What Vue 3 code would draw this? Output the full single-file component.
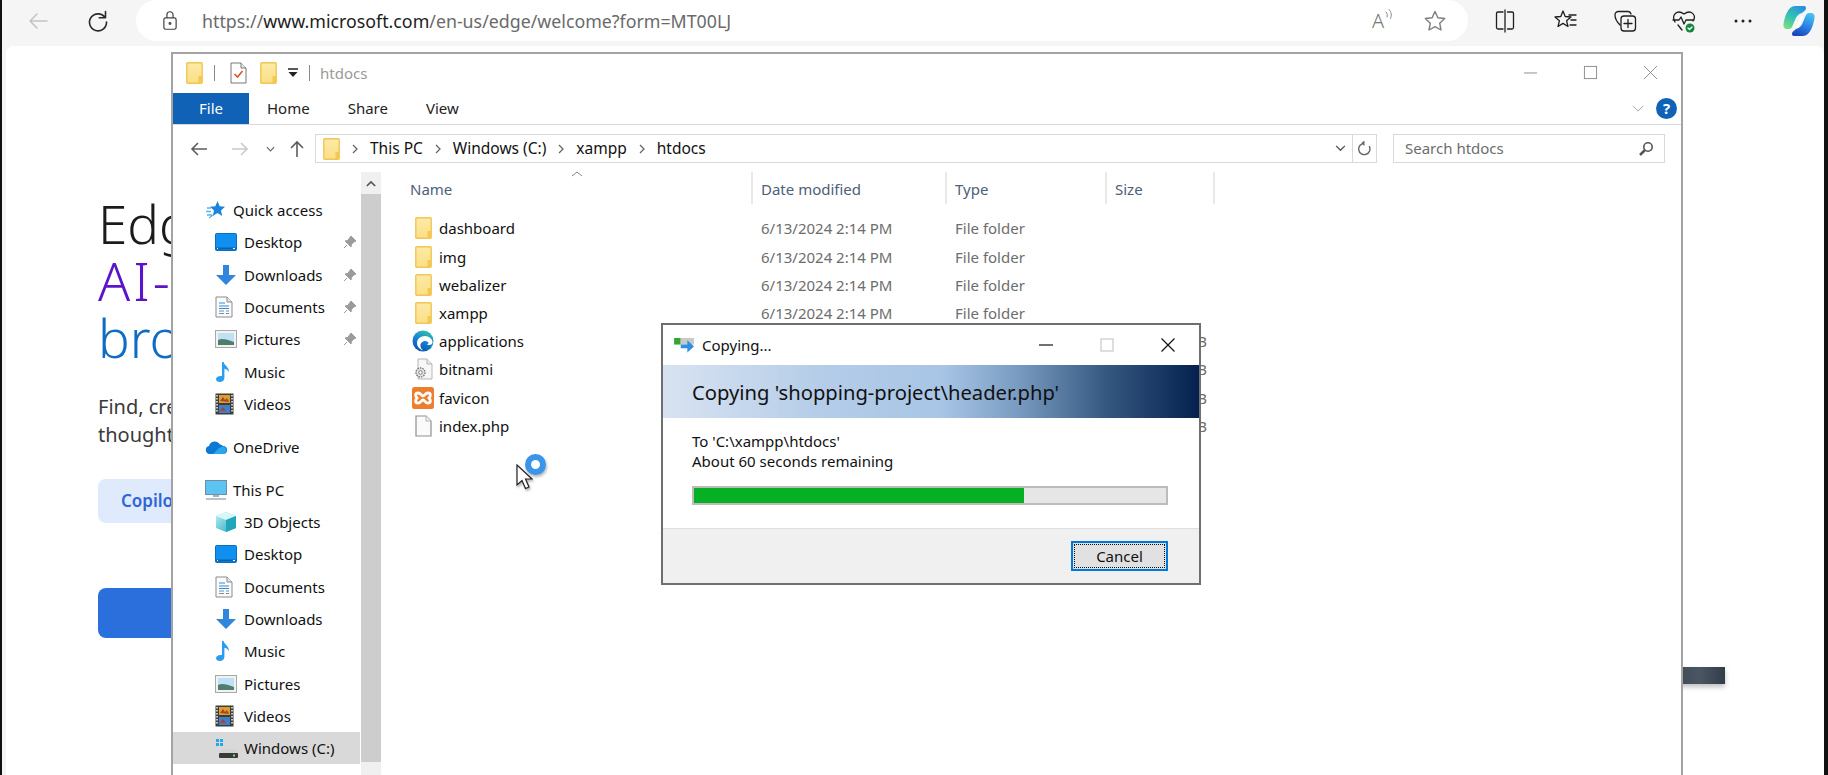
<template>
  <div class="screen">
    <svg class="defs" aria-hidden="true">
      <defs>
        <linearGradient id="folderFill" x1="0" y1="0" x2="0" y2="1">
          <stop offset="0" stop-color="#fdeaa6" />
          <stop offset="1" stop-color="#fbdf85" />
        </linearGradient>
        <linearGradient id="edgeFill" x1="0.7" y1="0" x2="0.3" y2="1">
          <stop offset="0" stop-color="#35c1a0" />
          <stop offset="0.45" stop-color="#1687d9" />
          <stop offset="1" stop-color="#0b4fa8" />
        </linearGradient>
        <linearGradient id="cubeFill" x1="0" y1="0" x2="1" y2="1">
          <stop offset="0" stop-color="#bdeff2" />
          <stop offset="1" stop-color="#22a9bd" />
        </linearGradient>
        <linearGradient id="copilotLeft" x1="0.8" y1="0" x2="0.2" y2="1">
          <stop offset="0" stop-color="#2b8fe0" />
          <stop offset="0.55" stop-color="#32c4b0" />
          <stop offset="1" stop-color="#7fdc84" />
        </linearGradient>
        <linearGradient id="copilotRight" x1="0.8" y1="0" x2="0.3" y2="1">
          <stop offset="0" stop-color="#45c4f0" />
          <stop offset="0.55" stop-color="#2a7fe8" />
          <stop offset="1" stop-color="#1b46b8" />
        </linearGradient>
      </defs>
      <symbol id="folder" viewBox="0 0 17 22">
        <rect x="0.8" y="0.8" width="15.4" height="20.4" rx="1" fill="url(#folderFill)" stroke="#f0c654" stroke-width="1.4" />
        <rect x="12.5" y="14" width="3.6" height="7" fill="#f5c84e" />
      </symbol>
      <symbol id="desktop" viewBox="0 0 22 18">
        <rect x="0.5" y="0.5" width="21" height="17" rx="1" fill="#0f8ff0" stroke="#0b6fc0" />
        <path d="M1 15.5h20" stroke="#0a62ad" stroke-width="2" />
        <path d="M2 15.5h1M18 15.5h2" stroke="#fff" />
      </symbol>
      <symbol id="downloads" viewBox="0 0 22 22">
        <path d="M8 1h6v10h7l-10 10L1 11h7z" fill="#2f86dc" />
      </symbol>
      <symbol id="documents" viewBox="0 0 18 22">
        <path d="M1 1h11l5 5v15H1z" fill="#fbfbfb" stroke="#8b8b8b" />
        <path d="M12 1v5h5" fill="#e6e6e6" stroke="#8b8b8b" />
        <path d="M4 7h6M4 10h10M4 12.5h10" stroke="#2a8fe0" />
        <path d="M4 15h5M4 17.5h5M11 15h3M11 17.5h3" stroke="#7c8c99" />
      </symbol>
      <symbol id="pictures" viewBox="0 0 22 18">
        <rect x="0.5" y="0.5" width="21" height="17" fill="#f2f2f2" stroke="#a9a9a9" />
        <rect x="3" y="3" width="16" height="12" fill="#bfe0f5" />
        <path d="M3 10c4-2 8-1 16 2v3H3z" fill="#4f7f6c" />
      </symbol>
      <symbol id="music" viewBox="0 0 16 22">
        <path d="M7 1h1.600c.6 3.500 5.400 4.800 5.400 10-1.300-2-3-3-4.600-3.300V17c0 2.600-2.300 4-4.600 4S1 19.800 1 18s2.400-3.500 6-3z" fill="#2a9df0" />
      </symbol>
      <symbol id="videos" viewBox="0 0 19 22">
        <rect x="0.5" y="0.500" width="18" height="21" fill="#3d3d3d" />
        <rect x="4" y="2" width="11" height="8" fill="#d8a12a" />
        <rect x="4" y="12" width="11" height="8" fill="#3f7fc7" />
        <path d="M5 8l3-4 2 3 2-2 2 4zM5 18l3-4 3 4z" fill="#b3402a" />
        <path d="M2 2v18M17 2v18" stroke="#eee" stroke-dasharray="1.500 1.500" stroke-width="1.500" />
      </symbol>
      <symbol id="onedrive" viewBox="0 0 22 14">
        <path d="M5 14a4 4 0 0 1-1-7.900 6 6 0 0 1 11-1.600 4.500 4.500 0 0 1 3 1.500A4 4 0 0 1 18 14z" fill="#0a78d4" />
        <path d="M8 14l6-6 4-1.800A4 4 0 0 1 18 14z" fill="#28a8ea" />
      </symbol>
      <symbol id="thispc" viewBox="0 0 22 20">
        <rect x="0.500" y="0.500" width="21" height="14" fill="#5cc3f2" stroke="#6f8da3" />
        <path d="M8 15h6v2H8z" fill="#a5b4bf" />
        <path d="M1 19h20" stroke="#9fb0bd" stroke-width="1.500" />
      </symbol>
      <symbol id="cube" viewBox="0 0 22 22">
        <path d="M11 1l10 4v12l-10 4-10-4V5z" fill="url(#cubeFill)" />
        <path d="M11 1l10 4-10 4L1 5z" fill="#d9f7f7" />
        <path d="M11 9v12l10-4V5z" fill="#1fa6ba" />
      </symbol>
      <symbol id="drive" viewBox="0 0 24 22">
        <path d="M1 2h3v3H1zM5 2h3v3H5zM1 6h3v3H1zM5 6h3v3H5z" fill="#22a7e8" />
        <path d="M8 12h12l3 4H4z" fill="#d3d3d3" />
        <rect x="4" y="16" width="19" height="5" rx="1" fill="#3a3a3a" />
        <rect x="18" y="17.500" width="2" height="2" fill="#6fe06f" />
      </symbol>
      <symbol id="usb" viewBox="0 0 24 22">
        <path d="M8 12h12l3 4H4z" fill="#d3d3d3" />
        <rect x="4" y="16" width="19" height="5" rx="1" fill="#3a3a3a" />
      </symbol>
      <symbol id="quick" viewBox="0 0 20 20">
        <path d="M12.500 1l2.200 5.300 5.300.5-4 3.700 1.200 5.500-4.700-2.900-4.700 2.900 1.200-5.500-4-3.700 5.300-.5z" fill="#1f83dc" />
        <path d="M2 8h4M1 11.500h5M2 15h5M4 18l4-3" stroke="#58b4ee" stroke-width="1.300" />
      </symbol>
      <symbol id="pin" viewBox="0 0 14 14">
        <path d="M8 1l5 5-2 .8-2.600 2.600-.4 2.600-6-6 2.600-.4L6.600 3zM4 10l-3 3" fill="#9b9b9b" stroke="#9b9b9b" stroke-width="1" />
      </symbol>
      <symbol id="edge" viewBox="0 0 22 22">
        <circle cx="11" cy="11" r="10.500" fill="url(#edgeFill)" />
        <path d="M20.500 12.500c.3-3.500-3.500-6.500-7.500-6.500-4.500 0-8 3-8 7 0 3.500 2.500 6.500 6.500 7.500-2.500-1.500-3.500-4-3-6 .5-2 2.500-3.500 4.500-3.500 2 0 3.500 1 3.500 2 0 .5-.5 1-1.500 1 1 1.500 5 1.500 5.500-1.500z" fill="#fff" />
        <path d="M21 12.500c-.5 4-3 7-6 8 2-.3 4-1.500 5-3.500z" fill="#4fd35c" />
      </symbol>
      <symbol id="gearfile" viewBox="0 0 20 22">
        <path d="M5 1h9l5 5v15H5z" fill="#f7f7f7" stroke="#b5b5b5" />
        <path d="M14 1v5h5" fill="#eaeaea" stroke="#b5b5b5" />
        <circle cx="7.500" cy="14.500" r="4.500" fill="#e6e6e6" stroke="#7a7a7a" stroke-width="1.500" stroke-dasharray="1.500 1" />
        <circle cx="7.500" cy="14.500" r="1.800" fill="#fff" stroke="#7a7a7a" />
      </symbol>
      <symbol id="xampp" viewBox="0 0 22 22">
        <rect width="22" height="22" rx="2.500" fill="#ee7d2d" />
        <path d="M6 6c3 0 3 3 5 3s2-3 5-3 3 3 1 5c2 2 2 5-1 5s-3-3-5-3-2 3-5 3-3-3-1-5c-2-2-2-5 1-5z" fill="none" stroke="#fff" stroke-width="2.800" />
      </symbol>
      <symbol id="page" viewBox="0 0 17 22">
        <path d="M1 1h10l5 5v15H1z" fill="#fafafa" stroke="#8f8f8f" stroke-width="1.200" />
        <path d="M11 1v5h5" fill="#f1f1f1" stroke="#b5b5b5" />
      </symbol>
      <symbol id="copyarrow" viewBox="0 0 22 18">
        <rect y="1" width="7" height="7" fill="#36a537" />
        <rect x="7" y="1" width="14" height="7" fill="#c9c9c9" />
        <path d="M7 8h7V3.500l7 6.500-7 6.500V12H7z" fill="#2f8fe3" />
      </symbol>
    </svg>

    <header class="toolbar">
      <div class="toolbar__nav">
        <svg class="toolbar__back" viewBox="0 0 24 24"><path d="M21 12H4M11 5l-7 7 7 7" /></svg>
        <svg class="toolbar__reload" viewBox="0 0 24 24"><path d="M19 8.500A8.500 8.500 0 1 0 20.500 13M19.500 2.500v6.300h-6.300" /></svg>
      </div>
      <div class="address">
        <svg class="address__lock" viewBox="0 0 18 24"><rect x="2" y="9" width="14" height="13" rx="2" /><path d="M5.500 9V5.500a3.500 3.500 0 0 1 7 0V9" /><circle cx="9" cy="15.500" r="1" /></svg>
        <span class="address__url">https://<b>www.microsoft.com</b>/en-us/edge/welcome?form=MT00LJ</span>
        <div class="address__tools">
          <span class="read">
            <span class="read__a">A</span>
            <svg viewBox="0 0 8 14"><path d="M1 4c1.500 1.500 1.500 3.500 1 5M4 1.500c2.500 2.500 3 6 1.500 9" /></svg>
          </span>
          <svg class="star" viewBox="0 0 24 24"><path d="M12 2.500l2.900 6.200 6.800.8-5 4.700 1.300 6.800-6-3.400-6 3.400 1.300-6.800-5-4.700 6.800-.8z" /></svg>
        </div>
      </div>
      <div class="actions">
        <svg viewBox="0 0 24 24"><path d="M10 3H5a1.500 1.500 0 0 0-1.500 1.500v14A1.500 1.500 0 0 0 5 20h5M14.500 3H19a1.500 1.500 0 0 1 1.500 1.500v14A1.500 1.500 0 0 1 19 20h-4.500M12 1v22" /></svg>
        <svg viewBox="0 0 24 24"><path d="M9 2l2.200 5.500 5.800.5-4.400 3.800 1.400 5.700L9 14.400l-5 3.100 1.400-5.700L1 8l5.800-.5zM15 6h7M17 11h5M16 16h6" /></svg>
        <svg class="actions__collections" viewBox="0 0 24 24"><path d="M7 16C4 13 2 9 2 6c0-2 1.500-3.500 3.500-3.500H15c1.500 0 2.500 1 3 2.500" /><rect x="8" y="7" width="14.500" height="15" rx="3" /><path d="M15 10.500v8M11 14.500h8" /></svg>
        <svg viewBox="0 0 24 24">
          <path d="M3 13C-1 6 5 0 12 5c7-5 13 1 9 7M1 11h6l2-3 3 7 2-4h8M6 16l4 5" />
          <circle cx="18" cy="19" r="4.500" fill="#12883a" stroke="none" />
          <path d="M16 19l1.500 1.500 2.500-2.500" stroke="#fff" />
        </svg>
        <svg viewBox="0 0 24 24"><circle cx="5" cy="12" r="1.500" class="dot" /><circle cx="12" cy="12" r="1.500" class="dot" /><circle cx="19" cy="12" r="1.500" class="dot" /></svg>
        <svg class="copilot" viewBox="0 0 32 32">
          <path d="M12 1h9c2 0 2.500 2 1.500 4L19 8c-4 1-6 4-7 7l-3 7c-1 2-3 2-5 2-2.500 0-4-2-3.500-5C1.500 12 5 1 12 1z" fill="url(#copilotLeft)" />
          <path d="M20 31h-9c-2 0-2.500-2-1.500-4l3.500-3c4-1 6-4 7-7l3-7c1-2 3-2 5-2 2.500 0 4 2 3.500 5C30.500 20 27 31 20 31z" fill="url(#copilotRight)" />
          <path d="M19 10c-2 2-4 7-6 12l1 1c3-2 5-7 6-12z" fill="#fff" />
        </svg>
      </div>
    </header>

    <main class="page">
      <div class="intro">
        <h1 class="hero">
          <span>Edg</span>
          <span class="hero__ai">AI-</span>
          <span class="hero__browser">bro</span>
        </h1>
        <p class="lead">Find, cre<br>thought</p>
        <div class="chip">Copilo</div>
        <div class="cta"></div>
      </div>
    </main>

    <div class="dark-block"></div>

    <section class="explorer">
      <div class="titlebar">
        <div class="qat">
          <svg class="qat__folder"><use href="#folder" /></svg>
          <i class="qat__sep"></i>
          <svg class="qat__doc" viewBox="0 0 17 22">
            <path d="M1 1h10l5 5v15H1z" fill="#fff" stroke="#777" />
            <path d="M11 1v5h5" fill="#eee" stroke="#777" />
            <path d="M4.500 12l3 3 5-6" fill="none" stroke="#d9562a" stroke-width="1.600" />
          </svg>
          <svg class="qat__folder qat__folder--second"><use href="#folder" /></svg>
          <svg class="qat__drop" viewBox="0 0 12 12"><path d="M1 2h10" stroke="#222" stroke-width="1.500" /><path d="M1.500 5h9L6 10z" fill="#222" /></svg>
          <i class="qat__sep qat__sep--last"></i>
          <span class="qat__title">htdocs</span>
        </div>
        <div class="winctl">
          <svg viewBox="0 0 16 16"><path d="M1 8.500h14" /></svg>
          <svg viewBox="0 0 16 16"><rect x="1.500" y="1.500" width="13" height="13" /></svg>
          <svg viewBox="0 0 16 16"><path d="M1 1l14 14M15 1L1 15" /></svg>
        </div>
      </div>

      <nav class="ribbon">
        <span class="ribbon__file">File</span>
        <span class="ribbon__tab ribbon__tab--home">Home</span>
        <span class="ribbon__tab">Share</span>
        <span class="ribbon__tab">View</span>
        <svg class="ribbon__chev" viewBox="0 0 14 8"><path d="M1 1l6 6 6-6" /></svg>
        <span class="ribbon__help">?</span>
      </nav>

      <div class="pathrow">
        <svg class="pathrow__nav" viewBox="0 0 20 20"><path d="M18 10H3M9 4l-6 6 6 6" /></svg>
        <svg class="pathrow__nav pathrow__nav--off" viewBox="0 0 20 20"><path d="M2 10h15M11 4l6 6-6 6" /></svg>
        <svg class="pathrow__small" viewBox="0 0 10 6"><path d="M1 1l4 4 4-4" /></svg>
        <svg class="pathrow__nav pathrow__nav--up" viewBox="0 0 20 20"><path d="M10 18V3M4 9l6-6 6 6" /></svg>
        <div class="crumbs">
          <svg class="crumbs__folder"><use href="#folder" /></svg>
          <template v-for="crumb in crumbs" :key="crumb">
            <svg class="crumbs__sep" viewBox="0 0 6 10"><path d="M1 1l4 4-4 4" /></svg>
            <span class="crumbs__item">{{ crumb }}</span>
          </template>
          <div class="crumbs__end">
            <svg class="crumbs__down" viewBox="0 0 12 8"><path d="M1 1l5 5 5-5" /></svg>
            <span class="crumbs__refresh">
              <svg viewBox="0 0 16 16"><path d="M13 5.500A6 6 0 1 1 8 2.500H5.500M8 .500l-2.500 2 2.500 2" /></svg>
            </span>
          </div>
        </div>
        <div class="search">
          <span class="search__text">Search htdocs</span>
          <svg viewBox="0 0 16 16"><circle cx="10" cy="6" r="4.200" /><path d="M7 9l-5 5" class="search__handle" /></svg>
        </div>
      </div>

      <div class="content">
        <aside class="tree">
          <div
            v-for="row in treeRows"
            :key="row.id"
            class="tree__row"
            :class="{
              'tree__row--root': row.root,
              'tree__row--active': row.active,
              'tree__row--gap': row.gap
            }"
          >
            <svg class="tree__icon" :style="{ width: row.w + 'px', height: row.h + 'px' }"><use :href="'#' + row.icon" /></svg>
            <span class="tree__label">{{ row.label }}</span>
            <svg v-if="row.pin" class="tree__pin"><use href="#pin" /></svg>
          </div>
        </aside>

        <div class="scrollbar">
          <div class="scrollbar__btn">
            <svg viewBox="0 0 12 8"><path d="M1 7l5-5 5 5" /></svg>
          </div>
          <div class="scrollbar__thumb"></div>
          <div class="scrollbar__end"></div>
        </div>

        <div class="files">
          <svg class="files__sort" viewBox="0 0 12 6"><path d="M1 5l5-4 5 4" /></svg>
          <div class="files__head">
            <span class="files__name">Name</span>
            <span>Date modified</span>
            <span>Type</span>
            <span>Size</span>
          </div>
          <div v-for="file in files" :key="file.name" class="files__row">
            <div class="files__cell">
              <span class="files__iconbox">
                <svg :style="{ width: file.w + 'px', height: file.h + 'px' }"><use :href="'#' + file.icon" /></svg>
              </span>
              <span class="files__label">{{ file.name }}</span>
            </div>
            <span class="files__meta">{{ file.date }}</span>
            <span class="files__meta">{{ file.type }}</span>
            <span class="files__size">{{ file.size }}</span>
          </div>
        </div>
      </div>
    </section>

    <section class="dialog">
      <div class="dialog__title">
        <svg class="dialog__icon"><use href="#copyarrow" /></svg>
        <span>Copying...</span>
        <div class="dialog__ctl">
          <svg viewBox="0 0 14 14"><path d="M0 7h14" /></svg>
          <svg class="dialog__max" viewBox="0 0 14 14"><rect x="1" y="1" width="12" height="12" /></svg>
          <svg viewBox="0 0 14 14"><path d="M0.500 0.500l13 13M13.500 0.500l-13 13" /></svg>
        </div>
      </div>
      <div class="dialog__band">Copying 'shopping-project\header.php'</div>
      <div class="dialog__body">
        <p>To 'C:\xampp\htdocs'</p>
        <p>About 60 seconds remaining</p>
        <div class="progress"><div class="progress__fill" :style="{ width: progress + '%' }"></div></div>
      </div>
      <div class="dialog__foot">
        <button class="cancel" type="button"><span>Cancel</span></button>
      </div>
    </section>

    <div class="pointer">
      <span class="pointer__ring"></span>
      <svg class="pointer__arrow" viewBox="0 0 17 26">
        <path d="M1 1v20l5-4.500 3.500 8 3.500-1.500-3.500-8H16z" fill="#fff" stroke="#222" stroke-width="1.200" />
      </svg>
    </div>
  </div>
</template>

<script setup>
const progress = 70

const crumbs = ['This PC', 'Windows (C:)', 'xampp', 'htdocs']

const treeRows = [
  { id: 'quick', label: 'Quick access', icon: 'quick', w: 20, h: 20, root: true },
  { id: 'd1', label: 'Desktop', icon: 'desktop', w: 22, h: 18, pin: true },
  { id: 'dl1', label: 'Downloads', icon: 'downloads', w: 22, h: 22, pin: true },
  { id: 'doc1', label: 'Documents', icon: 'documents', w: 18, h: 22, pin: true },
  { id: 'pic1', label: 'Pictures', icon: 'pictures', w: 22, h: 18, pin: true },
  { id: 'm1', label: 'Music', icon: 'music', w: 16, h: 22 },
  { id: 'v1', label: 'Videos', icon: 'videos', w: 19, h: 22 },
  { id: 'one', label: 'OneDrive', icon: 'onedrive', w: 22, h: 14, root: true, gap: true },
  { id: 'pc', label: 'This PC', icon: 'thispc', w: 22, h: 20, root: true, gap: true },
  { id: '3d', label: '3D Objects', icon: 'cube', w: 22, h: 22 },
  { id: 'd2', label: 'Desktop', icon: 'desktop', w: 22, h: 18 },
  { id: 'doc2', label: 'Documents', icon: 'documents', w: 18, h: 22 },
  { id: 'dl2', label: 'Downloads', icon: 'downloads', w: 22, h: 22 },
  { id: 'm2', label: 'Music', icon: 'music', w: 16, h: 22 },
  { id: 'pic2', label: 'Pictures', icon: 'pictures', w: 22, h: 18 },
  { id: 'v2', label: 'Videos', icon: 'videos', w: 19, h: 22 },
  { id: 'c', label: 'Windows (C:)', icon: 'drive', w: 24, h: 22, active: true },
  { id: 'tmp', label: 'Temporary Storage (D:)', icon: 'usb', w: 24, h: 22 },
]

const folderMeta = { date: '6/13/2024 2:14 PM', type: 'File folder', size: '', icon: 'folder', w: 17, h: 22 }

// the rows below the dialog only show their name and the tail of the size
const files = [
  { ...folderMeta, name: 'dashboard' },
  { ...folderMeta, name: 'img' },
  { ...folderMeta, name: 'webalizer' },
  { ...folderMeta, name: 'xampp' },
  { name: 'applications', date: '', type: '', size: '4 KB', icon: 'edge', w: 22, h: 22 },
  { name: 'bitnami', date: '', type: '', size: '1 KB', icon: 'gearfile', w: 20, h: 22 },
  { name: 'favicon', date: '', type: '', size: '31 KB', icon: 'xampp', w: 22, h: 22 },
  { name: 'index.php', date: '', type: '', size: '1 KB', icon: 'page', w: 17, h: 22 },
]
</script>

<style>
html, body {
  margin: 0;
  background: #fff;
  overflow: hidden;
}
</style>

<style scoped>
.screen {
  position: relative;
  width: 1828px;
  height: 775px;
  box-sizing: border-box;
  overflow: hidden;
  background: #f5f5f5;
  border-left: 2px solid #111;
  border-right: 4px solid #111;
  font-family: "Noto Sans", "Open Sans", sans-serif;
  font-size: 15px;
  color: #111;
}

.defs {
  position: absolute;
  width: 0;
  height: 0;
}

/* browser chrome */
.toolbar {
  display: flex;
  height: 46px;
}

.toolbar__nav {
  display: flex;
  width: 134px;
  height: 41px;
  align-items: center;
  padding-left: 24px;
  box-sizing: border-box;
}

.toolbar__nav svg,
.actions svg,
.star,
.read svg {
  fill: none;
  stroke-linecap: round;
  stroke-linejoin: round;
}

.toolbar__back {
  width: 24px;
  height: 24px;
  stroke: #c3c3c3;
  stroke-width: 1.5;
}

.toolbar__reload {
  width: 24px;
  height: 24px;
  margin-left: 36px;
  stroke: #2a2a2a;
  stroke-width: 1.6;
}

.address {
  display: flex;
  align-items: center;
  width: 1332px;
  height: 41px;
  background: #fff;
  border-radius: 21px;
}

.address__lock {
  width: 16px;
  height: 21px;
  margin-left: 26px;
  fill: none;
  stroke: #444;
  stroke-width: 1.400;
}

.address__url {
  margin-left: 24px;
  font-size: 17.800px;
  color: #6a6a6a;
  white-space: nowrap;
}

.address__url b {
  font-weight: 400;
  color: #1c1c1c;
}

.address__tools {
  display: flex;
  align-items: center;
  gap: 29px;
  margin-left: auto;
  padding-right: 21px;
}

.read {
  display: flex;
  align-items: flex-start;
  width: 22px;
}

.read__a {
  font-size: 20px;
  font-weight: 300;
  line-height: 26px;
  color: #777;
}

.read svg {
  width: 8px;
  height: 14px;
  margin-left: 1px;
  stroke: #8a8a8a;
  stroke-width: 1;
}

.star {
  width: 24px;
  height: 24px;
  stroke: #7d7d7d;
  stroke-width: 1.400;
}

.actions {
  display: grid;
  grid-template-columns: 61px 62px 56px 59px 55px 32px;
  align-items: center;
  height: 41px;
  padding-left: 25px;
}

.actions svg {
  width: 24px;
  height: 24px;
  stroke: #1f1f1f;
  stroke-width: 1.300;
}

.actions .dot {
  fill: #1f1f1f;
  stroke: none;
}

.actions .actions__collections {
  margin-left: -3px;
}

.actions .copilot {
  width: 32px;
  height: 32px;
  stroke: none;
  margin-left: -3px;
}

/* page behind the windows */
.page {
  height: 729px;
  margin-left: 4px;
  padding: 149px 0 0 92px;
  box-sizing: border-box;
  background: #fff;
  border-radius: 8px 8px 0 0;
}

.intro {
  width: 90px;
}

.hero {
  margin: 0;
  font-size: 53px;
  line-height: 57px;
  font-weight: 300;
  color: #1b1b1b;
  white-space: nowrap;
}

.hero span {
  display: block;
}

.hero .hero__ai {
  color: #5c14c9;
  letter-spacing: 3px;
}

.hero .hero__browser {
  color: #0f6cc4;
}

.lead {
  margin: 27px 0 0;
  font-size: 20px;
  line-height: 28px;
  color: #3a3a3a;
  white-space: nowrap;
}

.chip {
  width: 100px;
  height: 44px;
  margin-top: 30px;
  padding-left: 23px;
  box-sizing: border-box;
  background: #dfeafc;
  border-radius: 8px;
  font-size: 17px;
  font-weight: 600;
  line-height: 44px;
  color: #2d66d6;
}

.cta {
  width: 100px;
  height: 50px;
  margin-top: 65px;
  background: #2a6fdb;
  border-radius: 8px;
}

.dark-block {
  position: absolute;
  left: 1660px;
  top: 667px;
  width: 63px;
  height: 17px;
  background: linear-gradient(90deg, #3a4450, #4a5663 60%, #333d48);
  box-shadow: 0 3px 5px rgba(0, 0, 0, 0.25);
}

/* explorer window */
.explorer {
  position: absolute;
  left: 169px;
  top: 52px;
  display: flex;
  flex-direction: column;
  width: 1512px;
  height: 760px;
  box-sizing: border-box;
  background: #fff;
  border: 2px solid #a3a3a3;
}

.titlebar {
  display: flex;
  align-items: center;
  justify-content: space-between;
  height: 39px;
  padding-bottom: 2px;
  box-sizing: border-box;
  flex: none;
}

.qat {
  display: flex;
  align-items: center;
  padding-left: 13px;
}

.qat__folder {
  width: 17px;
  height: 22px;
}

.qat__folder--second {
  margin-left: 13px;
}

.qat__sep {
  width: 1px;
  height: 16px;
  margin-left: 11px;
  background: #8a8a8a;
}

.qat__sep--last {
  margin-left: 10px;
}

.qat__doc {
  width: 17px;
  height: 22px;
  margin-left: 15px;
}

.qat__drop {
  width: 12px;
  height: 12px;
  margin-left: 10px;
}

.qat__title {
  margin-left: 10px;
  color: #9a9a9a;
}

.winctl {
  display: flex;
  align-items: center;
  gap: 45px;
  padding-right: 23px;
}

.winctl svg {
  width: 15px;
  height: 15px;
  fill: none;
  stroke: #8a8a8a;
  stroke-width: 1;
}

.ribbon {
  position: relative;
  display: flex;
  align-items: center;
  height: 31px;
  flex: none;
  border-bottom: 1px solid #d9d9d9;
}

.ribbon__file {
  width: 76px;
  height: 31px;
  background: #0f62b5;
  color: #fff;
  line-height: 30px;
  text-align: center;
}

.ribbon__tab {
  margin-left: 38px;
  margin-bottom: 2px;
  color: #222;
}

.ribbon__tab--home {
  margin-left: 18px;
}

.ribbon__chev {
  width: 12px;
  height: 7px;
  margin-left: auto;
  fill: none;
  stroke: #9a9a9a;
  stroke-width: 1;
}

.ribbon__help {
  width: 21px;
  height: 21px;
  margin: 0 4px 0 12px;
  border-radius: 50%;
  background: #0f62b5;
  color: #fff;
  font-size: 15px;
  font-weight: 700;
  line-height: 21px;
  text-align: center;
}

.pathrow {
  display: flex;
  align-items: center;
  height: 29px;
  margin: 9px 0;
  flex: none;
  padding-left: 16px;
}

.pathrow svg {
  fill: none;
}

.pathrow__nav {
  width: 20px;
  height: 20px;
  stroke: #5d5d5d;
  stroke-width: 1.600;
}

.pathrow__nav--off {
  margin-left: 21px;
  stroke: #c9c9c9;
}

.pathrow__nav--up {
  margin-left: 12px;
}

.pathrow__small {
  width: 9px;
  height: 6px;
  margin-left: 16px;
  stroke: #666;
  stroke-width: 1.300;
}

.crumbs {
  display: flex;
  align-items: center;
  width: 1062px;
  height: 29px;
  margin-left: 8px;
  box-sizing: border-box;
  padding-left: 7px;
  border: 1px solid #d9d9d9;
}

.crumbs__folder {
  width: 17px;
  height: 22px;
}

.crumbs__sep {
  width: 6px;
  height: 10px;
  margin: 0 12px;
  stroke: #666;
  stroke-width: 1.300;
}

.crumbs__item {
  margin-bottom: 2px;
  font-size: 15.500px;
  color: #111;
}

.crumbs__end {
  display: flex;
  align-items: center;
  height: 100%;
  margin-left: auto;
}

.crumbs__down {
  width: 11px;
  height: 7px;
  margin-right: 6px;
  stroke: #555;
  stroke-width: 1.600;
}

.crumbs__refresh {
  display: flex;
  align-items: center;
  justify-content: center;
  width: 23px;
  height: 100%;
  border-left: 1px solid #d9d9d9;
}

.crumbs__refresh svg {
  width: 15px;
  height: 15px;
  stroke: #666;
  stroke-width: 1.500;
}

.search {
  display: flex;
  align-items: center;
  justify-content: space-between;
  width: 272px;
  height: 29px;
  margin-left: 16px;
  box-sizing: border-box;
  padding: 0 10px 0 11px;
  border: 1px solid #d9d9d9;
  color: #6d6d6d;
}

.search__text {
  margin-bottom: 2px;
}

.search svg {
  width: 16px;
  height: 16px;
  stroke: #555;
  stroke-width: 1.600;
}

.search__handle {
  stroke-width: 2.500;
}

.content {
  display: flex;
  flex: 1;
  min-height: 0;
}

.tree {
  width: 188px;
  flex: none;
  padding-top: 22px;
  overflow: hidden;
}

.tree__row {
  position: relative;
  display: flex;
  align-items: center;
  height: 32.300px;
  padding-left: 71px;
  white-space: nowrap;
  color: #111;
}

.tree__row--root {
  padding-left: 60px;
}

.tree__row--gap {
  margin-top: 10.700px;
}

.tree__row--active {
  margin-right: 1px;
  background: #d9d9d9;
}

.tree__icon {
  position: absolute;
  left: 42px;
  flex: none;
}

.tree__row--root .tree__icon {
  left: 32px;
}

.tree__pin {
  position: absolute;
  left: 170px;
  width: 14px;
  height: 14px;
}

.scrollbar {
  display: flex;
  flex-direction: column;
  width: 20px;
  flex: none;
}

.scrollbar__btn {
  display: flex;
  align-items: center;
  justify-content: center;
  height: 22px;
  background: #f0f0f0;
}

.scrollbar__btn svg {
  width: 10px;
  height: 7px;
  fill: none;
  stroke: #555;
  stroke-width: 2;
}

.scrollbar__thumb {
  height: 568px;
  background: #cdcdcd;
}

.scrollbar__end {
  flex: 1;
  background: #f0f0f0;
}

.files {
  position: relative;
  flex: 1;
}

.files__sort {
  position: absolute;
  left: 190px;
  top: -1px;
  width: 12px;
  height: 6px;
  fill: none;
  stroke: #888;
  stroke-width: 1;
}

.files__head,
.files__row {
  display: grid;
  grid-template-columns: 372px 194px 160px 108px;
  align-items: center;
}

.files__head {
  height: 32px;
  margin-bottom: 10.400px;
  color: #4c607a;
}

.files__head span {
  height: 32px;
  line-height: 35px;
  padding-left: 8px;
  box-sizing: border-box;
  border-right: 2px solid #e8e8e8;
}

.files__head .files__name {
  padding-left: 29px;
}

.files__row {
  height: 28.200px;
}

.files__cell {
  display: flex;
  align-items: center;
  padding-left: 31px;
}

.files__iconbox {
  display: flex;
  justify-content: center;
  width: 22px;
  height: 22px;
  margin-right: 5px;
}

.files__label {
  color: #111;
}

.files__meta {
  padding-left: 8px;
  color: #6d6d6d;
}

.files__size {
  padding-right: 8px;
  text-align: right;
  color: #6d6d6d;
}

/* copy dialog */
.dialog {
  position: absolute;
  left: 659px;
  top: 323px;
  display: flex;
  flex-direction: column;
  width: 540px;
  height: 262px;
  box-sizing: border-box;
  background: #fff;
  border: 2px solid #6f6f6f;
}

.dialog__title {
  display: flex;
  align-items: center;
  height: 40px;
  padding-left: 11px;
  flex: none;
}

.dialog__icon {
  width: 21px;
  height: 17px;
  margin-right: 7px;
}

.dialog__ctl {
  display: flex;
  align-items: center;
  gap: 47px;
  margin-left: auto;
  padding-right: 24px;
}

.dialog__ctl svg {
  width: 14px;
  height: 14px;
  fill: none;
  stroke: #111;
  stroke-width: 1.200;
}

.dialog__ctl .dialog__max {
  stroke: #c8c8c8;
}

.dialog__band {
  height: 53px;
  flex: none;
  padding-left: 29px;
  background: linear-gradient(90deg, #d8e3f1 0%, #b4cce8 30%, #a8c5e6 52%, #7a9cc2 66%, #34577f 83%, #05214f 100%);
  font-size: 20.200px;
  line-height: 54px;
  white-space: nowrap;
}

.dialog__body {
  flex: 1;
  padding: 13px 31px 0 29px;
}

.dialog__body p {
  margin: 0;
  line-height: 20px;
}

.progress {
  height: 19px;
  margin-top: 15px;
  box-sizing: border-box;
  background: #e6e6e6;
  border: 2px solid #bcbcbc;
}

.progress__fill {
  height: 100%;
  background: #06b025;
}

.dialog__foot {
  display: flex;
  justify-content: flex-end;
  height: 55px;
  box-sizing: border-box;
  padding: 12px 31px 0 0;
  flex: none;
  background: #f0f0f0;
  border-top: 1px solid #dfdfdf;
}

.cancel {
  width: 97px;
  height: 30px;
  padding: 0;
  box-sizing: border-box;
  background: #e1e1e1;
  border: 2px solid #0078d7;
  font: inherit;
  color: #111;
}

.cancel span {
  display: block;
  margin: 1px;
  border: 1px dotted #111;
  line-height: 22px;
}

/* mouse pointer with busy ring */
.pointer {
  position: absolute;
  left: 514px;
  top: 454px;
  width: 34px;
  height: 38px;
}

.pointer__ring {
  position: absolute;
  left: 9px;
  top: 0;
  width: 9px;
  height: 9px;
  border: 6px solid #3a96e8;
  border-radius: 50%;
  background: #fff;
  box-shadow: 1px 2px 3px rgba(0, 0, 0, 0.3);
}

.pointer__arrow {
  position: absolute;
  left: 0;
  top: 10px;
  width: 17px;
  height: 26px;
  filter: drop-shadow(1px 2px 1px rgba(0, 0, 0, 0.3));
}
</style>
